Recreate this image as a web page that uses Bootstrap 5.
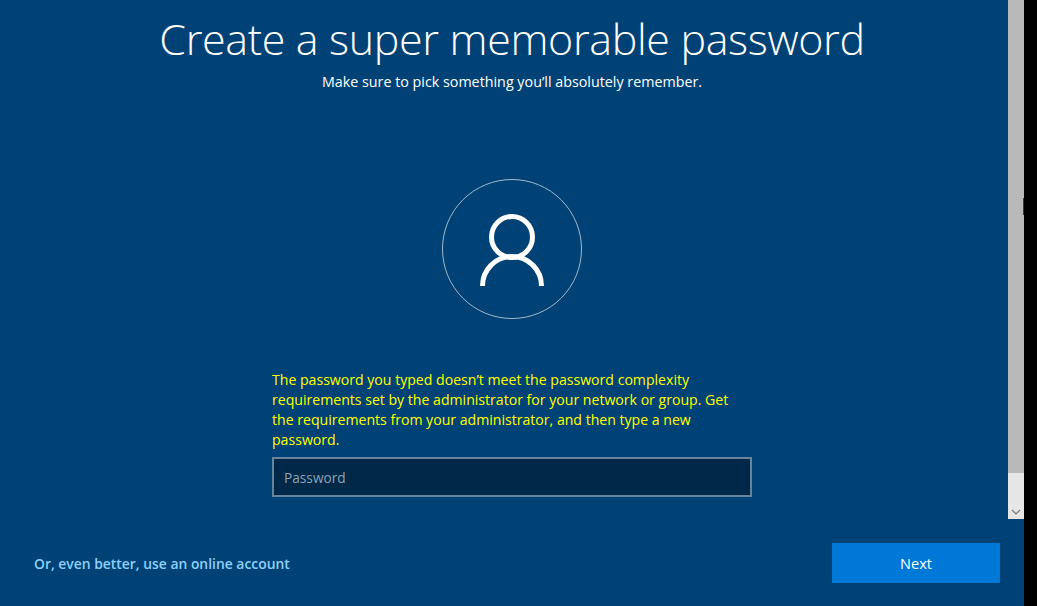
<!DOCTYPE html>
<html lang="en">
<head>
    <meta charset="UTF-8">
    <meta name="viewport" content="width=device-width, initial-scale=1.0">
    <title>Create a super memorable password</title>
    <link href="https://cdn.jsdelivr.net/npm/bootstrap@5.3.0/dist/css/bootstrap.min.css" rel="stylesheet">
    <style>
        html, body {
            height: 100%;
            margin: 0;
            overflow: hidden;
            background: #000;
        }
        body {
            font-family: "Open Sans", "Noto Sans", sans-serif;
        }
        .oobe-page {
            width: 1024px;
            height: 606px;
            background: #004275;
            color: #fff;
        }
        .oobe-title {
            font-size: 43px;
            font-weight: 300;
            letter-spacing: -0.35px;
            line-height: 60px;
            margin: 9px 0 0;
            white-space: nowrap;
        }
        .oobe-sub {
            font-size: 14.3px;
            line-height: 20px;
            margin: 3px 0 0;
        }
        .avatar-ring {
            width: 140px;
            height: 140px;
            margin-top: 87px;
            border: 1px solid #a3b9cb;
            border-radius: 50%;
        }
        .pw-block {
            width: 480px;
            margin-top: 51px;
        }
        .pw-error {
            color: #ffff00;
            font-size: 14.1px;
            line-height: 20px;
            margin: 0 0 7px;
        }
        .pw-input.form-control {
            height: 40px;
            border: 2px solid #66849c;
            border-radius: 0;
            background: #002849;
            color: #fff;
            font-size: 13.7px;
            padding: 0 10px;
        }
        .pw-input.form-control::placeholder {
            color: #8fa3b5;
            opacity: 1;
        }
        .oobe-foot {
            padding: 0 24px 0 34px;
            margin-top: 46px;
        }
        .online-link {
            color: #8ed0fb;
            font-size: 13.9px;
            font-weight: 600;
            text-decoration: none;
            padding-top: 2px;
        }
        .next-btn.btn {
            width: 168px;
            height: 40px;
            border: 0;
            border-radius: 0;
            background: #0078d7;
            color: #fff;
            font-size: 14.5px;
            padding: 2px 0 0;
        }
        .scroll-rail {
            top: 0;
            left: 1008px;
            width: 16px;
            height: 519px;
            background: #e6e6e6;
        }
        .scroll-thumb {
            height: 473px;
            background: #b9b9b9;
        }
        .scroll-arrow {
            bottom: 3px;
            left: 3px;
        }
        .scroll-tick {
            top: 198px;
            right: 0;
            width: 1px;
            height: 17px;
            background: #3a3a3a;
        }
    </style>
</head>
<body>
    <div class="oobe-page position-relative d-flex flex-column">
        <div class="d-flex flex-column align-items-center text-center">
            <h1 class="oobe-title">Create a super memorable password</h1>
            <p class="oobe-sub">Make sure to pick something you’ll absolutely remember.</p>

            <div class="avatar-ring d-flex align-items-center justify-content-center">
                <svg width="64" height="74" viewBox="0 -2 64 74" fill="none" stroke="#fff" stroke-width="5">
                    <circle cx="32" cy="23" r="20.5"></circle>
                    <path d="M2.5 72 A29.5 29.5 0 0 1 61.5 72"></path>
                </svg>
            </div>

            <div class="pw-block text-start">
                <p class="pw-error">The password you typed doesn’t meet the password complexity requirements set by the administrator for your network or group. Get the requirements from your administrator, and then type a new password.</p>
                <input type="password" class="form-control pw-input" placeholder="Password">
            </div>
        </div>

        <div class="oobe-foot d-flex align-items-center justify-content-between">
            <a href="#" class="online-link">Or, even better, use an online account</a>
            <button type="button" class="btn next-btn">Next</button>
        </div>

        <div class="scroll-rail position-absolute">
            <div class="scroll-thumb"></div>
            <div class="scroll-tick position-absolute"></div>
            <svg class="scroll-arrow position-absolute" width="10" height="7" viewBox="0 0 10 7" fill="none" stroke="#777" stroke-width="1.2">
                <path d="M1 1 L5 5 L9 1"></path>
            </svg>
        </div>
    </div>
    <script src="https://cdn.jsdelivr.net/npm/bootstrap@5.3.0/dist/js/bootstrap.bundle.min.js"></script>
</body>
</html>
